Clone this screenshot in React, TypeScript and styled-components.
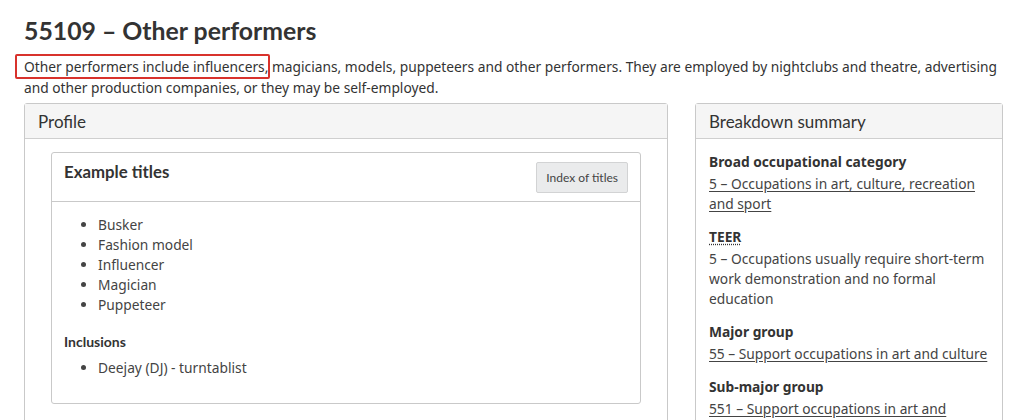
import React from 'react';
import styled, { createGlobalStyle } from 'styled-components';

const GlobalStyle = createGlobalStyle`
  html, body {
    margin: 0;
    padding: 0;
    background: #fff;
  }
  body {
    font-family: 'Noto Sans', sans-serif;
    color: #333;
  }
`;

const Page = styled.main`
  padding: 14px 21px 0 24px;
  width: 1024px;
  height: 420px;
  box-sizing: border-box;
  overflow: hidden;
`;

const Title = styled.h1`
  font-family: Lato, sans-serif;
  font-weight: 700;
  font-size: 24.8px;
  line-height: 34px;
  margin: 0 0 8px;
  color: #333;
`;

const Lead = styled.p`
  font-size: 13.77px;
  line-height: 21px;
  margin: 0 0 5px;
  color: #333;
`;

const Marked = styled.span`
  position: relative;

  &::after {
    content: '';
    position: absolute;
    left: -9px;
    right: -2px;
    top: -3px;
    bottom: -3px;
    border: 2px solid #d8322c;
    border-radius: 2px;
  }
`;

const Columns = styled.div`
  display: grid;
  grid-template-columns: 644px 308px;
  gap: 27px;
  align-items: start;
`;

const Panel = styled.section`
  border: 1px solid #c9c9c9;
  border-radius: 3px;
  background: #fff;
`;

const PanelHead = styled.div`
  background: #f5f5f5;
  border-bottom: 1px solid #cfcfcf;
  padding: 0 13px;
  height: 34px;
  display: flex;
  align-items: center;
  font-family: Lato, sans-serif;
  font-size: 17px;
  color: #333;
`;

const ProfileBody = styled.div`
  padding: 13px 26px 30px;
`;

const Card = styled.div`
  border: 1px solid #c9c9c9;
  border-radius: 3px;
`;

const CardHead = styled.div`
  display: flex;
  justify-content: space-between;
  align-items: flex-start;
  padding: 9px 12px 8px 12px;
  border-bottom: 1px solid #c9c9c9;
`;

const CardTitle = styled.h2`
  font-family: Lato, sans-serif;
  font-size: 16.8px;
  font-weight: 700;
  line-height: 20px;
  margin: 0;
  color: #333;
`;

const Button = styled.button`
  font-family: Lato, sans-serif;
  font-size: 12px;
  color: #444;
  background: #eaebec;
  border: 1px solid #d2d3d4;
  border-radius: 2px;
  height: 31px;
  padding: 0 9px;
  margin-top: 0;
`;

const CardBody = styled.div`
  padding: 13px 12px 25px;
`;

const Bullets = styled.ul`
  margin: 0;
  padding-left: 34px;
  font-size: 13.77px;
  line-height: 20px;
  color: #444;
  font-family: 'Noto Sans', sans-serif;
`;

const SubHeading = styled.h3`
  font-family: Lato, sans-serif;
  font-size: 14px;
  font-weight: 700;
  line-height: 18px;
  margin: 18px 0 7px;
  color: #333;
`;

const SummaryBody = styled.div`
  padding: 13px 8px 0 13px;
`;

const Group = styled.dl`
  margin: 0 0 13px;
`;

const Label = styled.dt`
  font-size: 13.77px;
  font-weight: 700;
  line-height: 20px;
  margin-bottom: 2px;
  color: #333;
`;

const Abbr = styled.abbr`
  text-decoration: underline dotted;
  text-underline-offset: 2px;
`;

const Value = styled.dd`
  margin: 0;
  font-size: 13.77px;
  line-height: 20px;
  color: #444;
`;

const Link = styled.a`
  color: #444;
  text-decoration: underline;
  text-underline-offset: 2px;
`;

const titles = ['Busker', 'Fashion model', 'Influencer', 'Magician', 'Puppeteer'];

const App: React.FC = () => (
  <>
    <GlobalStyle />
    <Page>
      <Title>55109 – Other performers</Title>
      <Lead>
        <Marked>Other performers include influencers,</Marked> magicians, models, puppeteers and other
        performers. They are employed by nightclubs and theatre, advertising and other production
        companies, or they may be self-employed.
      </Lead>
      <Columns>
        <Panel>
          <PanelHead>Profile</PanelHead>
          <ProfileBody>
            <Card>
              <CardHead>
                <CardTitle>Example titles</CardTitle>
                <Button>Index of titles</Button>
              </CardHead>
              <CardBody>
                <Bullets>
                  {titles.map((t) => (
                    <li key={t}>{t}</li>
                  ))}
                </Bullets>
                <SubHeading>Inclusions</SubHeading>
                <Bullets>
                  <li>Deejay (DJ) - turntablist</li>
                </Bullets>
              </CardBody>
            </Card>
          </ProfileBody>
        </Panel>
        <Panel>
          <PanelHead>Breakdown summary</PanelHead>
          <SummaryBody>
            <Group>
              <Label>Broad occupational category</Label>
              <Value>
                <Link href="#">5 – Occupations in art, culture, recreation and sport</Link>
              </Value>
            </Group>
            <Group>
              <Label>
                <Abbr title="Training, Education, Experience and Responsibilities">TEER</Abbr>
              </Label>
              <Value>5 – Occupations usually require short-term work demonstration and no formal education</Value>
            </Group>
            <Group>
              <Label>Major group</Label>
              <Value>
                <Link href="#">55 – Support occupations in art and culture</Link>
              </Value>
            </Group>
            <Group>
              <Label>Sub-major group</Label>
              <Value>
                <Link href="#">551 – Support occupations in art and culture</Link>
              </Value>
            </Group>
          </SummaryBody>
        </Panel>
      </Columns>
    </Page>
  </>
);

export default App;
